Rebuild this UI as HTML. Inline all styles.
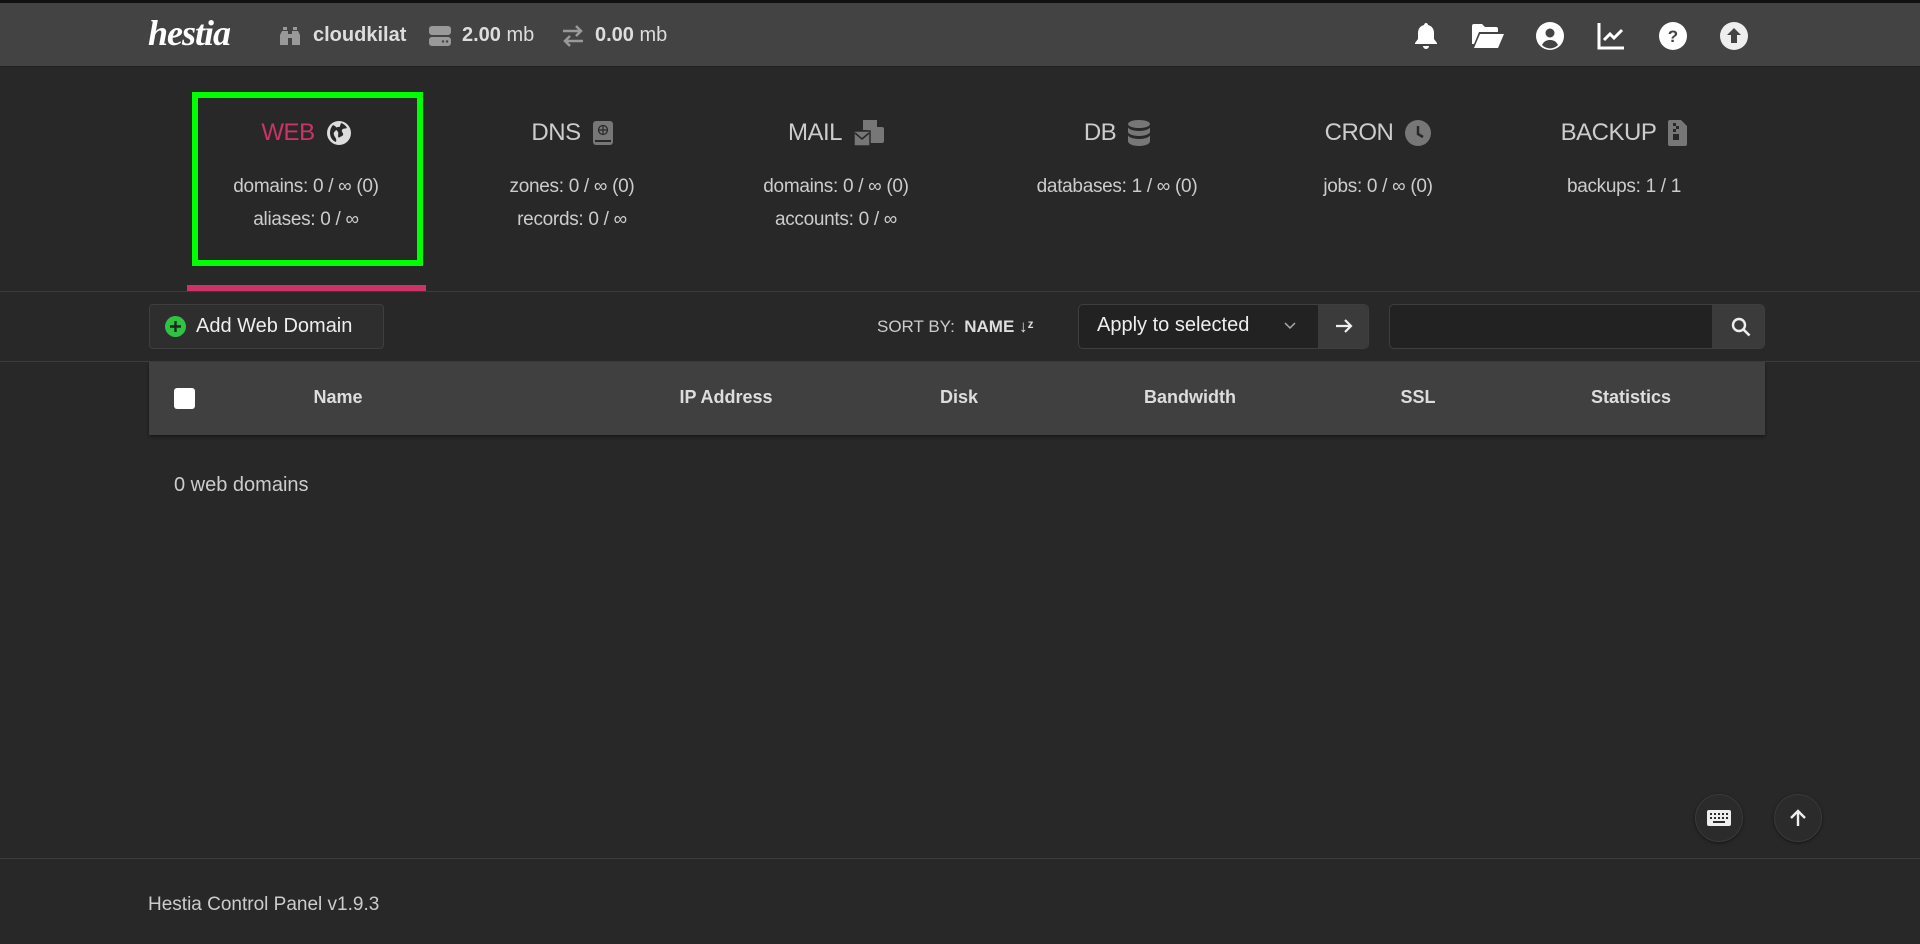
<!DOCTYPE html>
<html><head><meta charset="utf-8"><style>
*{box-sizing:border-box;margin:0;padding:0}
body{width:1920px;height:944px;background:#282828;color:#ccc;font-family:"Liberation Sans",sans-serif;position:relative;overflow:hidden}
.abs{position:absolute}
.top{left:0;top:0;width:1920px;height:67px;background:#434343;border-top:3px solid #111;border-bottom:1px solid #222}
.ico{fill:#fff}
.tab{position:absolute;top:116px;width:280px;text-align:center;transform:translateX(-50%)}
.tab h2{font-weight:normal;font-size:24px;color:#ccc;height:34px;display:flex;align-items:center;justify-content:center;gap:12px;letter-spacing:-0.5px}
.tab p{font-size:19px;color:#ccc;margin-top:27px;line-height:19px;letter-spacing:-0.3px}
.tab p+p{margin-top:14px}
.th{position:absolute;top:387px;font-weight:bold;font-size:18px;color:#ddd;transform:translateX(-50%)}
</style></head><body>
<div class="abs top"></div>
<div class="abs" style="left:148px;top:12px;font-family:'Liberation Serif',serif;font-style:italic;font-weight:bold;font-size:36px;color:#fff;letter-spacing:-1px">hestia</div>
<svg class="abs" style="left:280px;top:27px" width="20" height="18" viewBox="0 0 20 18"><path fill="#999" d="M2 4h6v14H0V8zM12 4h6l2 4v10h-8zM3 0h4v3H3zM13 0h4v3h-4zM8 7h4v4H8z"/></svg>
<div class="abs" style="left:313px;top:24px;font-size:20px;font-weight:bold;color:#ddd">cloudkilat</div>
<svg class="abs" style="left:429px;top:26px" width="22" height="20" viewBox="0 0 22 20"><rect x="0" y="0" width="22" height="9" rx="3" fill="#999"/><rect x="0" y="11" width="22" height="9" rx="3" fill="#999"/><circle cx="14" cy="15.5" r="1.2" fill="#444"/><circle cx="18" cy="15.5" r="1.2" fill="#444"/></svg>
<div class="abs" style="left:462px;top:24px;font-size:20px;color:#ddd"><b>2.00</b> mb</div>
<svg class="abs" style="left:561px;top:25px" width="24" height="22" viewBox="0 0 24 22"><path d="M2 6h18M15 1l5 5-5 5M22 16H4M9 11l-5 5 5 5" stroke="#999" stroke-width="2.5" fill="none"/></svg>
<div class="abs" style="left:595px;top:24px;font-size:20px;color:#ddd"><b>0.00</b> mb</div>
<svg class="abs" style="left:1414px;top:22px" width="24" height="28" viewBox="0 0 24 28"><path class="ico" d="M12 1c1 0 2 1 2 2 4 1 6 4 6 8v6l3 4v1H1v-1l3-4v-6c0-4 2-7 6-8 0-1 1-2 2-2zM9 24h6a3 3 0 0 1-6 0z"/></svg>
<svg class="abs" style="left:1472px;top:24px" width="32" height="24" viewBox="0 0 32 24"><path class="ico" d="M0 2a2 2 0 0 1 2-2h8l3 3h11a2 2 0 0 1 2 2v3H7L2 20H0zM8 10h24l-6 14H2z"/></svg>
<svg class="abs" style="left:1536px;top:22px" width="28" height="28" viewBox="0 0 28 28"><circle cx="14" cy="14" r="14" fill="#fff"/><circle cx="14" cy="11" r="4.5" fill="#434343"/><path d="M6 23c2-4 5-5 8-5s6 1 8 5a11 11 0 0 1-16 0z" fill="#434343"/></svg>
<svg class="abs" style="left:1597px;top:22px" width="28" height="28" viewBox="0 0 28 28"><path d="M2 1v25h25" stroke="#fff" stroke-width="3" fill="none"/><path d="M7 18l6-6 4 4 8-8" stroke="#fff" stroke-width="3" fill="none"/></svg>
<svg class="abs" style="left:1659px;top:22px" width="28" height="28" viewBox="0 0 28 28"><circle cx="14" cy="14" r="14" fill="#fff"/><text x="14" y="20" text-anchor="middle" font-family="Liberation Sans" font-weight="bold" font-size="17" fill="#434343">?</text></svg>
<svg class="abs" style="left:1720px;top:22px" width="28" height="28" viewBox="0 0 28 28"><circle cx="14" cy="14" r="14" fill="#eee"/><path d="M14 6l7 7h-4v8h-6v-8H7z" fill="#434343"/></svg>

<div class="abs" style="left:192px;top:92px;width:231px;height:174px;border:6px solid #00ff00"></div>
<div class="abs" style="left:187px;top:285px;width:239px;height:6px;background:#cc3366"></div>
<div class="abs" style="left:0;top:291px;width:1920px;height:1px;background:#3c3c3c"></div>

<div class="tab" style="left:306px"><h2><span style="color:#cc3366">WEB</span><svg width="24" height="24" viewBox="0 0 24 24"><circle cx="12" cy="12" r="12" fill="#ddd"/><path d="M6 4c3 1 4 3 3 5s-3 2-2 5 3 3 2 7c-3-1-6-4-6-9 0-3 1-6 3-8zM14 2c3 1 5 3 6 5-2 1-4 0-5 2s2 3 1 5-3 1-4 3c-2-2 0-4-1-6s-3-2-2-4 4 0 4-2z" fill="#282828"/></svg></h2><p>domains: 0 / ∞ (0)</p><p>aliases: 0 / ∞</p></div>
<div class="tab" style="left:572px"><h2>DNS<svg width="20" height="24" viewBox="0 0 20 24"><rect x="0" y="0" width="20" height="24" rx="3" fill="#777"/><circle cx="10" cy="9" r="4.5" fill="none" stroke="#282828" stroke-width="1.2"/><path d="M5.5 9h9M10 4.5v9" stroke="#282828" stroke-width="1.2"/><rect x="2" y="19" width="16" height="2" fill="#282828"/></svg></h2><p>zones: 0 / ∞ (0)</p><p>records: 0 / ∞</p></div>
<div class="tab" style="left:836px"><h2>MAIL<svg width="30" height="26" viewBox="0 0 30 26"><rect x="9" y="0" width="14" height="10" fill="#777"/><rect x="13" y="7" width="17" height="16" rx="2" fill="#777"/><rect x="0" y="11" width="16" height="15" fill="#777" stroke="#282828" stroke-width="1.5"/><path d="M1 13l7 6 7-6" stroke="#282828" stroke-width="1.5" fill="none"/></svg></h2><p>domains: 0 / ∞ (0)</p><p>accounts: 0 / ∞</p></div>
<div class="tab" style="left:1117px"><h2>DB<svg width="22" height="26" viewBox="0 0 22 26"><ellipse cx="11" cy="4" rx="11" ry="4" fill="#777"/><path d="M0 7c0 2 5 4 11 4s11-2 11-4v5c0 2-5 4-11 4S0 14 0 12zM0 15c0 2 5 4 11 4s11-2 11-4v6c0 3-5 5-11 5S0 24 0 21z" fill="#777"/></svg></h2><p>databases: 1 / ∞ (0)</p></div>
<div class="tab" style="left:1378px"><h2>CRON<svg width="26" height="26" viewBox="0 0 26 26"><circle cx="13" cy="13" r="13" fill="#777"/><path d="M13 6v8l5 3" stroke="#282828" stroke-width="2.5" fill="none"/></svg></h2><p>jobs: 0 / ∞ (0)</p></div>
<div class="tab" style="left:1624px"><h2>BACKUP<svg width="19" height="26" viewBox="0 0 19 26"><path d="M2 0h11l6 6v18a2 2 0 0 1-2 2H2a2 2 0 0 1-2-2V2a2 2 0 0 1 2-2z" fill="#777"/><path d="M5 3h3v3H5zM8 6h3v3H8zM5 9h3v3H5zM5 14h6v6H5z" fill="#282828"/></svg></h2><p>backups: 1 / 1</p></div>

<div class="abs" style="left:149px;top:304px;width:235px;height:45px;background:#2e2e2e;border:1px solid #3e3e3e;border-radius:4px"></div>
<svg class="abs" style="left:165px;top:316px" width="21" height="21" viewBox="0 0 21 21"><circle cx="10.5" cy="10.5" r="10.5" fill="#2ec441"/><path d="M10.5 5v11M5 10.5h11" stroke="#222" stroke-width="2.4"/></svg>
<div class="abs" style="left:196px;top:315px;font-size:20px;color:#eee">Add Web Domain</div>
<div class="abs" style="left:877px;top:317px;font-size:17px;color:#ccc">SORT BY: &nbsp;<b style="color:#ddd">NAME ↓ᶻ</b></div>
<div class="abs" style="left:1078px;top:304px;width:291px;height:45px;background:#222;border:1px solid #3e3e3e;border-radius:5px;overflow:hidden"><div class="abs" style="right:0;top:0;width:50px;height:45px;background:#3b3b3b"></div></div>
<div class="abs" style="left:1097px;top:314px;font-size:20px;color:#eee">Apply to selected</div>
<svg class="abs" style="left:1284px;top:322px" width="12" height="8" viewBox="0 0 12 8"><path d="M1 1l5 5 5-5" stroke="#aaa" stroke-width="1.5" fill="none"/></svg>
<svg class="abs" style="left:1335px;top:318px" width="18" height="16" viewBox="0 0 18 16"><path d="M1 8h15M10 2l6 6-6 6" stroke="#eee" stroke-width="2.2" fill="none"/></svg>
<div class="abs" style="left:1389px;top:304px;width:376px;height:45px;background:#222;border:1px solid #3e3e3e;border-radius:5px;overflow:hidden"><div class="abs" style="right:0;top:0;width:52px;height:45px;background:#3b3b3b"></div></div>
<svg class="abs" style="left:1731px;top:317px" width="20" height="20" viewBox="0 0 20 20"><circle cx="8" cy="8" r="6" stroke="#eee" stroke-width="2.4" fill="none"/><path d="M12.5 12.5l6 6" stroke="#eee" stroke-width="2.6"/></svg>
<div class="abs" style="left:0;top:361px;width:1920px;height:1px;background:#3c3c3c"></div>

<div class="abs" style="left:149px;top:362px;width:1616px;height:73px;background:#404040;box-shadow:0 2px 3px rgba(0,0,0,.4)"></div>
<div class="abs" style="left:174px;top:388px;width:21px;height:21px;background:#fff;border-radius:3px"></div>
<div class="th" style="left:338px">Name</div>
<div class="th" style="left:726px">IP Address</div>
<div class="th" style="left:959px">Disk</div>
<div class="th" style="left:1190px">Bandwidth</div>
<div class="th" style="left:1418px">SSL</div>
<div class="th" style="left:1631px">Statistics</div>
<div class="abs" style="left:174px;top:474px;font-size:20px;color:#ccc">0 web domains</div>

<div class="abs" style="left:1695px;top:794px;width:48px;height:48px;border-radius:50%;background:#2b2b2b;border:1px solid #3a3a3a;box-shadow:0 1px 3px rgba(0,0,0,.5)"></div>
<svg class="abs" style="left:1707px;top:810px" width="24" height="16" viewBox="0 0 24 16"><rect x="0" y="0" width="24" height="16" rx="2" fill="#eee"/><g fill="#2b2b2b"><rect x="3" y="3" width="2" height="2"/><rect x="7" y="3" width="2" height="2"/><rect x="11" y="3" width="2" height="2"/><rect x="15" y="3" width="2" height="2"/><rect x="19" y="3" width="2" height="2"/><rect x="3" y="7" width="2" height="2"/><rect x="7" y="7" width="2" height="2"/><rect x="11" y="7" width="2" height="2"/><rect x="15" y="7" width="2" height="2"/><rect x="19" y="7" width="2" height="2"/><rect x="6" y="11" width="12" height="2"/></g></svg>
<div class="abs" style="left:1774px;top:794px;width:48px;height:48px;border-radius:50%;background:#2b2b2b;border:1px solid #3a3a3a;box-shadow:0 1px 3px rgba(0,0,0,.5)"></div>
<svg class="abs" style="left:1789px;top:809px" width="18" height="18" viewBox="0 0 18 18"><path d="M9 17V2M2 9l7-7 7 7" stroke="#eee" stroke-width="2.4" fill="none"/></svg>

<div class="abs" style="left:0;top:858px;width:1920px;height:1px;background:#3c3c3c"></div>
<div class="abs" style="left:148px;top:894px;font-size:19px;color:#ccc">Hestia Control Panel v1.9.3</div>
</body></html>
